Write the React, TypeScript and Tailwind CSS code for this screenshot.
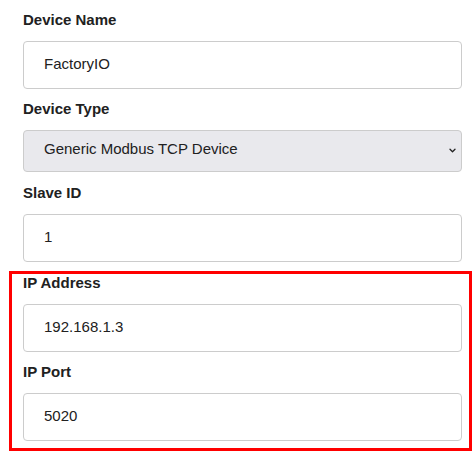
import { useState } from "react";

const inputCls =
  "block w-full h-[48px] rounded-[4px] border border-[#cccccc] bg-white pl-[20px] pr-3 pt-[13px] pb-[16px] text-[15px] leading-[17px] text-[#212121] outline-none";

function Label({ children }: { children: string }) {
  return <label className="block mb-[13px] text-[15px] leading-[17px] font-bold text-[#212121]">{children}</label>;
}

export default function App() {
  const [name, setName] = useState("FactoryIO");
  const [type, setType] = useState("modbus");
  const [slave, setSlave] = useState("1");
  const [ip, setIp] = useState("192.168.1.3");
  const [port, setPort] = useState("5020");

  return (
    <div className="min-h-screen bg-white pl-[23px] pr-[13px] pt-[11px]" style={{ fontFamily: '"Liberation Sans", Arial, sans-serif' }}>
      <div className="mb-[11px]">
        <Label>Device Name</Label>
        <input className={inputCls} value={name} onChange={(e) => setName(e.target.value)} />
      </div>

      <div className="mb-[12px]">
        <Label>Device Type</Label>
        <div className="relative">
          <select
            value={type}
            onChange={(e) => setType(e.target.value)}
            className="block w-full h-[42px] appearance-none rounded-[4px] border border-[#cccccc] bg-[#e9e9ed] pl-[20px] pr-8 pt-[9px] pb-[14px] text-[15px] leading-[17px] text-[#212121] outline-none"
          >
            <option value="modbus">Generic Modbus TCP Device</option>
            <option value="rtu">Generic Modbus RTU Device</option>
          </select>
          <svg
            className="pointer-events-none absolute right-[6px] top-[18px]"
            width="7"
            height="5"
            viewBox="0 0 7 5"
            fill="none"
          >
            <path d="M1 1.2 L3.5 3.7 L6 1.2" stroke="#222" strokeWidth="1.3" strokeLinecap="round" strokeLinejoin="round" />
          </svg>
        </div>
      </div>

      <div className="mb-[9px]">
        <Label>Slave ID</Label>
        <input className={inputCls} value={slave} onChange={(e) => setSlave(e.target.value)} />
      </div>

      {/* highlighted connection block */}
      <div className="-ml-[14px] -mr-[10px] border-[3px] border-[#ff0000] pl-[11px] pr-[7px] pb-[7px]">
        <div className="mb-[11px]">
          <Label>IP Address</Label>
          <input className={inputCls} value={ip} onChange={(e) => setIp(e.target.value)} />
        </div>
        <div>
          <Label>IP Port</Label>
          <input className={inputCls} value={port} onChange={(e) => setPort(e.target.value)} />
        </div>
      </div>
    </div>
  );
}
